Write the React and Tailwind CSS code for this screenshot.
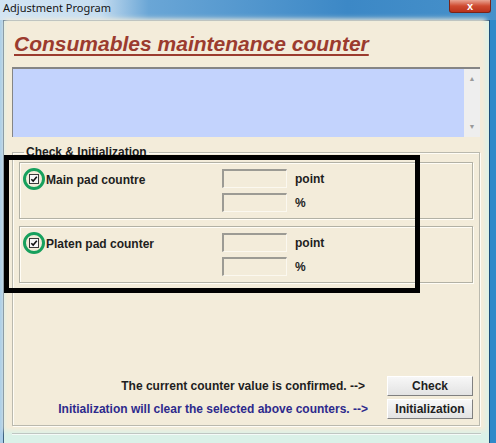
import React from "react";

const arial = "font-['Liberation_Sans',Arial,sans-serif]";

function Field() {
  return (
    <div className="w-[65px] h-[19px] bg-[#f3ecda] border-t-2 border-l-2 border-b border-r border-t-[#9c9b94] border-l-[#9c9b94] border-b-[#fbf8ef] border-r-[#fbf8ef]" />
  );
}

function CheckBox() {
  return (
    <div className="relative w-[10px] h-[10px] shrink-0">
      <svg width="10" height="10" viewBox="0 0 10 10" className="block">
        <rect x="0.5" y="0.5" width="9" height="9" fill="#f7f7f7" stroke="#3a3a3a" />
        <path d="M2.3 5.2 L4.2 7.1 L7.8 2.8" fill="none" stroke="#111" strokeWidth="1.6" />
      </svg>
      {/* green annotation ring */}
      <div className="absolute -left-[6px] -top-[6px] w-[22px] h-[22px] rounded-full border-[3px] border-[#17a05d]" />
    </div>
  );
}

function Counter({ label }) {
  return (
    <div className="h-[57px] border border-[#b2b1a5] shadow-[inset_1px_1px_0_#fffdf6,1px_1px_0_#fffdf6] flex pt-[6px] pl-[9px]">
      <div className="w-[193px] flex items-start pt-[5px]">
        <CheckBox />
        <span className="ml-[7px] -mt-[1px] text-[12px] leading-[14px] font-bold text-[#1e1e1e]">{label}</span>
      </div>
      <div className="flex flex-col gap-[5px]">
        <div className="flex items-center">
          <Field />
          <span className="ml-[8px] text-[12px] leading-[14px] font-bold text-[#1e1e1e]">point</span>
        </div>
        <div className="flex items-center">
          <Field />
          <span className="ml-[8px] text-[12px] leading-[14px] font-bold text-[#1e1e1e]">%</span>
        </div>
      </div>
    </div>
  );
}

function WinButton({ children }) {
  return (
    <button className="w-[86px] h-[20px] bg-[linear-gradient(#f7f7f7,#e3e3e3)] border border-t-white border-l-white border-b-[#808080] border-r-[#808080] text-[12px] leading-[14px] font-bold text-[#1e1e1e]">
      {children}
    </button>
  );
}

export default function App() {
  return (
    <div className={`relative w-[496px] h-[443px] overflow-hidden flex flex-col bg-[#8fbfe3] ${arial}`}>
      {/* title bar */}
      <div className="h-[20px] shrink-0 flex items-start bg-[linear-gradient(90deg,#d3e5f3_0%,#c6ddf0_20%,#6aa6d6_30%,#3c88c6_70%,#4791ca_100%)]">
        <span className="ml-[3px] mt-[1px] text-[11px] leading-[14px] text-[#151515] font-['Noto_Sans',sans-serif]">Adjustment Program</span>
        <div className="ml-auto mr-[5px] w-[42px] h-[13px] rounded-b-[3px] border border-t-0 border-[#7a2418] bg-[linear-gradient(#e9a594,#cf4a30_50%,#b8321c)] flex items-center justify-center">
          <span className="text-white text-[11px] leading-[10px] font-bold">x</span>
        </div>
      </div>

      {/* body */}
      <div className="flex-1 flex min-h-0">
        <div className="w-[3px] bg-[#a9cde9]" />
        <div className="flex-1 flex flex-col border-l border-t border-[#3f6180] bg-[#daf1e8]">
          <div className="flex-1 flex flex-col ml-[3px] mr-[6px] mt-[1px] pl-[5px] pr-[3px] pb-[2px] bg-[#f3ecda] shadow-[0_0_5px_3px_#f3ecda]">
            <div className="mt-[10px] pl-[2px] h-[24px] text-[21px] leading-[24px] font-bold italic underline decoration-2 underline-offset-[3px] text-[#9b3b2e]">
              Consumables maintenance counter
            </div>
            <div className="mt-[11px] h-[70px] flex bg-[#c3d3fd] border-t-2 border-l border-[#858585]">
              <div className="flex-1" />
              <div className="w-[16px] bg-[#eeeeee] flex flex-col items-center justify-between py-[6px] text-[7px] leading-[8px] text-[#9a9a9a]">
                <span>▲</span>
                <span>▼</span>
              </div>
            </div>

            <fieldset className="mt-[8px] flex-1 min-h-0 flex flex-col border border-[#bab9ae] shadow-[inset_1px_1px_0_#fffdf6,1px_1px_0_#fffdf6] px-[6px] pt-[3px] pb-[6px]">
              <legend className="ml-[5px] px-[2px] text-[12px] leading-[14px] font-bold text-[#1e1e1e]">Check &amp; Initialization</legend>
              <div className="flex flex-col gap-[7px]">
                <Counter label="Main pad countre" />
                <Counter label="Platen pad counter" />
              </div>
              <div className="flex-1" />
              <div className="flex flex-col gap-[3px]">
                <div className="flex items-center justify-end">
                  <span className="mr-[22px] text-[12px] leading-[14px] font-bold text-[#1e1e1e]">The current counter value is confirmed. --&gt;</span>
                  <WinButton>Check</WinButton>
                </div>
                <div className="flex items-center justify-end">
                  <span className="mr-[19px] text-[12px] leading-[14px] font-bold text-[#2d2a8c]">Initialization will clear the selected above counters. --&gt;</span>
                  <WinButton>Initialization</WinButton>
                </div>
              </div>
            </fieldset>
          </div>
          <div className="h-[15px] shrink-0 pt-[5px] px-[8px]">
            <div className="h-[2px] border-t border-b border-t-[#bfc6c2] border-b-[#f4fbf8]" />
          </div>
        </div>
        <div className="w-[7px] bg-[#2f89c9] border-l border-[#1d4f7a]" />
      </div>

      {/* black annotation frame */}
      <div className="absolute left-[4px] top-[155px] w-[416px] h-[138px] border-[5px] border-black" />
    </div>
  );
}
